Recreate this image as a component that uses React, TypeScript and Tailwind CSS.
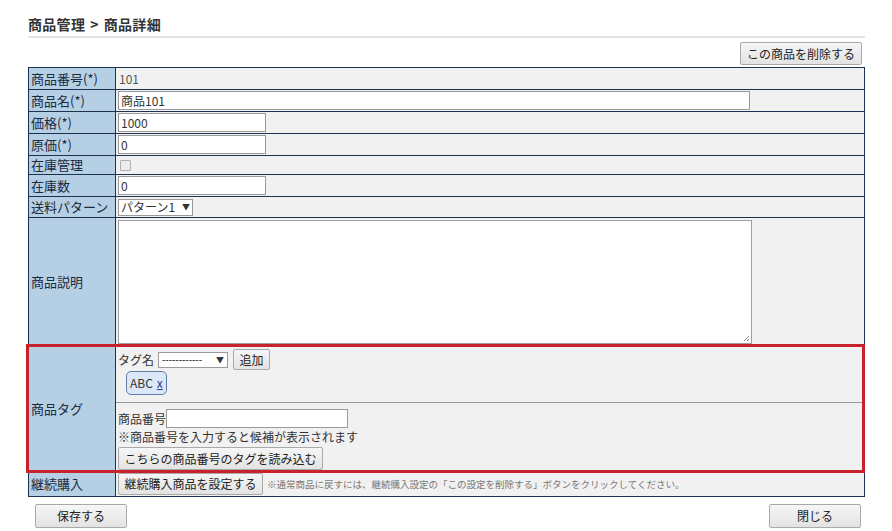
const font = { fontFamily: '"Noto Sans CJK JP", "Liberation Sans", sans-serif' };

function Btn({ children, className = '' }: { children: React.ReactNode; className?: string }) {
  return (
    <button
      className={`border border-[#a9a9a9] bg-gradient-to-b from-[#f6f6f6] to-[#e3e3e3] rounded-[2px] text-[12px] text-[#222] leading-none ${className}`}
    >
      {children}
    </button>
  );
}

function Row({ label, h, children, last = false }: { label: string; h: string; children?: React.ReactNode; last?: boolean }) {
  return (
    <div className={`flex ${h} ${last ? '' : 'border-b border-[#1c3250]'}`}>
      <div className="w-[87px] shrink-0 bg-[#b5cfe4] border-r border-[#1c3250] flex items-center pl-[2px] text-[13px] text-[#1d2b3e]">
        {label}
      </div>
      <div className="flex-1 bg-[#f1f1f1] flex items-center pl-[2px] text-[12px] text-[#333]">{children}</div>
    </div>
  );
}

export default function App() {
  return (
    <div className="w-[892px] h-[531px] bg-white relative" style={font}>
      <div className="pl-[28px] pr-[27px] pt-[14px]">
        <h1 className="text-[14px] font-bold text-[#333] leading-[20px] tracking-[0.3px]">
          商品管理<span className="mx-[5px]">&gt;</span>商品詳細
        </h1>
        <div className="h-[2px] bg-[#e4e4e4] mt-[2px]" />
        <div className="flex justify-end mt-[4px] pr-[3px]">
          <Btn className="h-[23px] w-[122px]">この商品を削除する</Btn>
        </div>

        <div className="mt-[2px] border border-[#1c3250]">
          <Row label="商品番号(*)" h="h-[22px]">
            <span className="text-[#555] pl-[1px]">101</span>
          </Row>
          <Row label="商品名(*)" h="h-[22px]">
            <div className="w-[632px] h-[19px] bg-white border border-[#9a9a9a] px-[2px] text-[12px] leading-[17px]">商品101</div>
          </Row>
          <Row label="価格(*)" h="h-[22px]">
            <div className="w-[148px] h-[19px] bg-white border border-[#9a9a9a] px-[2px] text-[12px] leading-[17px]">1000</div>
          </Row>
          <Row label="原価(*)" h="h-[22px]">
            <div className="w-[148px] h-[19px] bg-white border border-[#9a9a9a] px-[2px] text-[12px] leading-[17px]">0</div>
          </Row>
          <Row label="在庫管理" h="h-[19px]">
            <div className="ml-[2px] w-[11px] h-[11px] border border-[#b0b0b0] bg-[#ececec] rounded-[1px]" />
          </Row>
          <Row label="在庫数" h="h-[22px]">
            <div className="w-[148px] h-[19px] bg-white border border-[#9a9a9a] px-[2px] text-[12px] leading-[17px]">0</div>
          </Row>
          <Row label="送料パターン" h="h-[21px]">
            <div className="h-[17px] w-[75px] bg-white border border-[#9a9a9a] flex items-center justify-between px-[2px] text-[12px]">
              <span>パターン1</span>
              <span className="text-[8px]">▼</span>
            </div>
          </Row>
          <div className="flex h-[128px] border-b border-[#1c3250]">
            <div className="w-[87px] shrink-0 bg-[#b5cfe4] border-r border-[#1c3250] flex items-center pl-[2px] text-[13px] text-[#1d2b3e]">
              商品説明
            </div>
            <div className="flex-1 bg-[#f1f1f1] pl-[2px] pt-[2px]">
              <div className="w-[634px] h-[124px] bg-white border border-[#a0a0a0] relative">
                <svg className="absolute right-[1px] bottom-[1px]" width="8" height="8" viewBox="0 0 8 8">
                  <path d="M7 2 L2 7 M7 5 L5 7" stroke="#888" strokeWidth="1" />
                </svg>
              </div>
            </div>
          </div>

          <div className="relative flex h-[126px] border-b border-[#1c3250]">
            <div className="w-[87px] shrink-0 bg-[#b5cfe4] border-r border-[#1c3250] flex items-center pl-[2px] text-[13px] text-[#1d2b3e]">
              商品タグ
            </div>
            <div className="flex-1 bg-[#f1f1f1] flex flex-col text-[12px] text-[#333]">
              <div className="h-[57px] pl-[2px] pt-[3px] border-b border-[#9a9a9a]">
                <div className="flex items-center gap-[4px]">
                  <span>タグ名</span>
                  <div className="h-[16px] w-[70px] bg-white border border-[#9a9a9a] flex items-center justify-between px-[3px] text-[10px] overflow-hidden">
                    <span style={{ fontFamily: '"Liberation Sans", sans-serif' }}>------------</span>
                    <span className="text-[8px]">▼</span>
                  </div>
                  <Btn className="h-[21px] w-[37px] ml-[1px]">追加</Btn>
                </div>
                <div className="mt-[1px] ml-[8px] inline-flex items-center gap-[4px] h-[24px] px-[3px] bg-[#dbe8f8] border border-[#5d7fa6] rounded-[5px] text-[12px]">
                  <span>ABC</span>
                  <span className="text-[#2a3a9a] underline">x</span>
                </div>
              </div>
              <div className="pl-[2px] pt-[6px] flex flex-col">
                <div className="flex items-center h-[19px]">
                  <span>商品番号</span>
                  <div className="w-[182px] h-[19px] bg-white border border-[#9a9a9a]" />
                </div>
                <div className="h-[18px] leading-[18px]">※商品番号を入力すると候補が表示されます</div>
                <Btn className="h-[23px] w-[205px] mt-[1px]">こちらの商品番号のタグを読み込む</Btn>
              </div>
            </div>
            <div className="absolute -left-[3px] -right-[1px] -top-[2px] -bottom-[2px] border-[3px] border-[#c8232c] pointer-events-none" />
          </div>

          <Row label="継続購入" h="h-[24px]" last>
            <Btn className="h-[22px] w-[145px]">継続購入商品を設定する</Btn>
            <span className="ml-[4px] text-[9.5px] text-[#777]">
              ※通常商品に戻すには、継続購入設定の「この設定を削除する」ボタンをクリックしてください。
            </span>
          </Row>
        </div>

        <div className="flex justify-between mt-[7px] pl-[7px] pr-[4px]">
          <Btn className="h-[24px] w-[92px]">保存する</Btn>
          <Btn className="h-[24px] w-[92px]">閉じる</Btn>
        </div>
      </div>
    </div>
  );
}
